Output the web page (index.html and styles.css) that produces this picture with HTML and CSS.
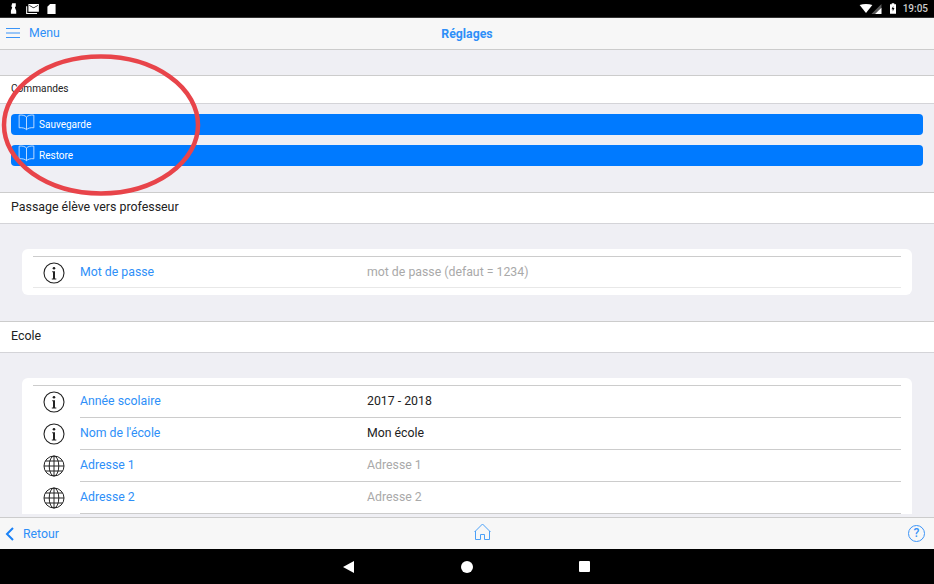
FILE: index.html
```html
<!DOCTYPE html>
<html lang="fr">

<head>
    <meta charset="UTF-8" />
    <title>Réglages</title>
    <link rel="stylesheet" href="styles.css">
</head>

<body>
    <svg class="defs" width="0" height="0">
        <symbol id="info" viewBox="0 0 22 22">
            <circle cx="11" cy="11" r="10" fill="none" stroke="#222" stroke-width="1.1" />
            <circle cx="11" cy="6.2" r="1.3" fill="#222" />
            <path d="M9.2 9.2h2.8v7.2h1.3v1H8.8v-1H10V10.200H9.200z" fill="#222" />
        </symbol>
        <symbol id="globe" viewBox="0 0 22 22">
            <g fill="none" stroke="#222" stroke-width="1">
                <circle cx="11" cy="11" r="10" />
                <ellipse cx="11" cy="11" rx="4.800" ry="10" />
                <path d="M11 1v20M1 11h20M2.400 6h17.200M2.400 16h17.200" />
            </g>
        </symbol>
        <symbol id="book" viewBox="0 0 18 18">
            <path d="M9 3.200C7.400 1.400 4.200.8 1.200 1.200v13.400c3-.4 6.200.2 7.800 2 1.600-1.800 4.800-2.400 7.800-2V1.200C13.800.8 10.600 1.400 9 3.200zv13.400"
                fill="none" stroke="#dcebff" stroke-width=".9" />
        </symbol>
    </svg>

    <div class="status-bar">
        <div class="status-group">
            <svg width="8" height="11" viewBox="0 0 9 12"><path d="M2.500 0h4v3.500l-1 1.500 1.500 3.500v3.500H1V8.500L2.500 5l-1-1.500z" fill="#fff" /></svg>
            <svg width="13" height="10" viewBox="0 0 14 11"><path d="M2.500 0H14v8.500H2.500zM3.500 1v.8l4.700 3 4.800-3V1L8.200 3.800zM0 2.500h1.200v7.300H12V11H0z" fill="#fff" fill-rule="evenodd" /></svg>
            <svg width="9" height="10" viewBox="0 0 9 11"><path d="M3 0h6v11H0V3z" fill="#fff" /></svg>
        </div>
        <div class="status-group right">
            <svg width="24" height="10" viewBox="0 0 25 11"><path d="M0 1C4 -.3 10 -.3 14 1L7 10z" fill="#fff" /><path d="M24 0v11H13z" fill="#fff" opacity=".35" /><path d="M24 4v7H17z" fill="#fff" /></svg>
            <svg width="6" height="11" viewBox="0 0 7 12"><path d="M2 0h3v1h2v11H0V1h2zM3.800 3 1.800 7h1.400v2.500l2-4H3.800z" fill="#fff" fill-rule="evenodd" /></svg>
            <span class="clock">19:05</span>
        </div>
    </div>

    <header class="top-bar">
        <div class="menu-link">
            <svg width="14" height="10" viewBox="0 0 14 10"><path d="M0 .5h14M0 5h14M0 9.500h14" stroke="#3b94f7" stroke-width="1" /></svg>
            <span>Menu</span>
        </div>
        <div class="page-title">Réglages</div>
    </header>

    <main class="content">
        <div class="section-head small">Commandes</div>
        <div class="commands">
            <div class="cmd-btn"><svg class="book" width="17" height="17"><use href="#book" /></svg>Sauvegarde</div>
            <div class="cmd-btn"><svg class="book" width="17" height="17"><use href="#book" /></svg>Restore</div>
        </div>

        <div class="section-head">Passage élève vers professeur</div>
        <div class="card">
            <div class="rows">
                <div class="row">
                    <svg class="row-icon" width="22" height="22"><use href="#info" /></svg>
                    <div class="row-body last">
                        <span class="row-label">Mot de passe</span>
                        <span class="row-value empty">mot de passe (defaut = 1234)</span>
                    </div>
                </div>
            </div>
        </div>

        <div class="section-head">Ecole</div>
        <div class="card open">
            <div class="rows">
                <div class="row">
                    <svg class="row-icon" width="22" height="22"><use href="#info" /></svg>
                    <div class="row-body">
                        <span class="row-label">Année scolaire</span>
                        <span class="row-value">2017 - 2018</span>
                    </div>
                </div>
                <div class="row">
                    <svg class="row-icon" width="22" height="22"><use href="#info" /></svg>
                    <div class="row-body">
                        <span class="row-label">Nom de l'école</span>
                        <span class="row-value">Mon école</span>
                    </div>
                </div>
                <div class="row">
                    <svg class="row-icon" width="22" height="22"><use href="#globe" /></svg>
                    <div class="row-body">
                        <span class="row-label">Adresse 1</span>
                        <span class="row-value empty">Adresse 1</span>
                    </div>
                </div>
                <div class="row">
                    <svg class="row-icon" width="22" height="22"><use href="#globe" /></svg>
                    <div class="row-body">
                        <span class="row-label">Adresse 2</span>
                        <span class="row-value empty">Adresse 2</span>
                    </div>
                </div>
            </div>
        </div>
    </main>

    <footer class="bottom-bar">
        <div class="back-link">
            <svg width="10" height="14" viewBox="0 0 10 14"><path d="M8 1 2 7l6 6" fill="none" stroke="#1a82f7" stroke-width="2" /></svg>
            <span>Retour</span>
        </div>
        <svg class="home" width="17" height="17" viewBox="0 0 17 17"><path d="M.5 9 8.500 1l8 8M1.500 8v8.500h5v-5h4v5h5V8" fill="none" stroke="#4ba0f8" stroke-width="1" /></svg>
        <div class="help">?</div>
    </footer>

    <div class="nav-bar">
        <svg width="12" height="12" viewBox="0 0 12 12"><path d="M11 0v12L0 6z" fill="#fff" /></svg>
        <svg width="12" height="12" viewBox="0 0 12 12"><circle cx="6" cy="6" r="6" fill="#fff" /></svg>
        <svg width="12" height="12" viewBox="0 0 12 12"><rect width="11" height="11" rx="1" fill="#fff" /></svg>
    </div>

    <!-- hand drawn annotation on top of the screenshot -->
    <svg class="circled" width="202" height="146" viewBox="0 0 202 146">
        <ellipse cx="100" cy="71" rx="97" ry="68.500" fill="none" stroke="#e8444a" stroke-width="4.500" />
    </svg>
</body>

</html>
```

FILE: styles.css
```css
* {
    box-sizing: border-box;
}

body {
    margin: 0;
    width: 934px;
    height: 584px;
    display: flex;
    flex-direction: column;
    overflow: hidden;
    position: relative;
    background: #efeff4;
    font-family: Roboto, "Liberation Sans", sans-serif;
    font-size: 12.300px;
    color: #222;
}

.defs {
    position: absolute;
}

.status-bar {
    height: 18px;
    flex: none;
    display: flex;
    justify-content: space-between;
    align-items: center;
    padding: 0 6px 0 10px;
    background: #000;
    border-bottom: 1px solid #333;
}

.status-group {
    display: flex;
    align-items: center;
    gap: 8px;
}

.status-group.right {
    gap: 7px;
}

.clock {
    color: #ccc;
    font-size: 10px;
    font-weight: 500;
}

.top-bar {
    height: 32px;
    flex: none;
    display: flex;
    align-items: center;
    justify-content: center;
    position: relative;
    background: #f7f7f7;
    border-bottom: 1px solid #ccc;
}

.menu-link {
    position: absolute;
    left: 6px;
    top: 0;
    bottom: 1px;
    display: flex;
    align-items: center;
    gap: 9px;
    color: #2e8ff8;
}

.page-title {
    color: #2e8ff8;
    font-weight: 700;
}

.content {
    flex: 1;
    min-height: 0;
    overflow: hidden;
    padding-top: 25px;
}

.section-head {
    height: 32px;
    display: flex;
    align-items: center;
    padding: 0 0 3px 11px;
    background: #fff;
    border-top: 1px solid #ccc;
    border-bottom: 1px solid #d4d4d8;
    font-size: 12.400px;
}

.section-head.small {
    height: 29px;
    padding-bottom: 2px;
    font-size: 10.150px;
}

.commands {
    display: flex;
    flex-direction: column;
    gap: 10px;
    padding: 10px 11px 26px;
}

.cmd-btn {
    height: 21px;
    display: flex;
    align-items: center;
    padding-left: 7px;
    gap: 4px;
    background: #007aff;
    border-radius: 4px;
    color: #fff;
    font-size: 10px;
}

.book {
    margin-top: -4px;
}

.card {
    margin: 25px 22px 26px;
    padding: 7px 11px;
    background: #fff;
    border-radius: 6px;
}

.card.open {
    margin-bottom: 0;
    padding-bottom: 0;
    border-radius: 6px 6px 0 0;
}

.rows {
    border-top: 1px solid #ccc;
}

.row {
    height: 32px;
    display: flex;
    align-items: center;
    padding-left: 10px;
}

.card:not(.open) .row {
    height: 31px;
}

.row-icon {
    flex: none;
}

.row-body {
    flex: 1;
    align-self: stretch;
    margin-left: 15px;
    padding-bottom: 2px;
    display: flex;
    align-items: center;
    border-bottom: 1px solid #ccc;
}

.row-body.last {
    margin-left: -32px;
    padding: 0 0 0 47px;
    border-bottom-color: #e8e8e8;
}

.row-label {
    width: 287px;
    color: #2e8ff8;
}

.row-value.empty {
    color: #a9a9a9;
}

.bottom-bar {
    height: 32px;
    flex: none;
    display: flex;
    align-items: center;
    justify-content: center;
    position: relative;
    padding-left: 30px;
    background: #f7f7f7;
    border-top: 1px solid #ccc;
}

.home {
    margin-top: -4px;
}

.back-link {
    position: absolute;
    left: 5px;
    top: 0;
    bottom: 0;
    display: flex;
    align-items: center;
    gap: 8px;
    color: #2e8ff8;
}

.help {
    position: absolute;
    right: 9px;
    top: 7px;
    width: 17px;
    height: 17px;
    border: 1px solid #3b94f7;
    border-radius: 50%;
    color: #3b94f7;
    font-size: 12px;
    font-weight: 500;
    line-height: 15px;
    text-align: center;
}

.nav-bar {
    height: 35px;
    flex: none;
    display: flex;
    align-items: center;
    justify-content: center;
    gap: 106px;
    background: #000;
}

.circled {
    position: absolute;
    left: 1px;
    top: 54px;
    pointer-events: none;
}
```
